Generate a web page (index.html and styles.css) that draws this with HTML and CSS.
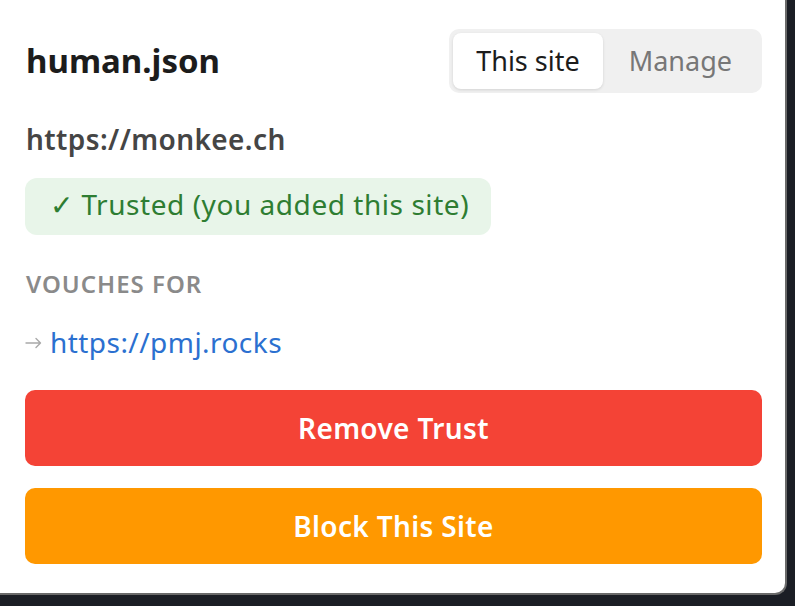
FILE: index.html
```html
<!DOCTYPE html>
<html lang="en">
<head>
<meta charset="utf-8">
<title>human.json</title>
<link rel="stylesheet" href="styles.css">
</head>
<body>
<div class="panel">
  <div class="header">
    <h1 class="title">human.json</h1>
    <div class="tabs">
      <span class="tab tab-active">This site</span>
      <span class="tab">Manage</span>
    </div>
  </div>
  <div class="site-url">https://monkee.ch</div>
  <div class="badge-row"><span class="badge">✓ Trusted (you added this site)</span></div>
  <div class="label">VOUCHES FOR</div>
  <div class="vouch">
    <svg class="arrow" width="17" height="12" viewBox="0 0 17 12" aria-hidden="true"><path d="M1 6H15.5M11 1.5L15.5 6L11 10.5" fill="none" stroke="#a9a9a9" stroke-width="1.4" stroke-linecap="round" stroke-linejoin="round"/></svg>
    <a class="vouch-link" href="#">https://pmj.rocks</a>
  </div>
  <button class="btn btn-red">Remove Trust</button>
  <button class="btn btn-orange">Block This Site</button>
</div>
</body>
</html>
```
FILE: styles.css
```css
* { box-sizing: border-box; }
html, body { margin: 0; padding: 0; }
body {
  background: #1b1e25;
  font-family: "Noto Sans", "Open Sans", sans-serif;
  width: 795px;
  height: 606px;
  overflow: hidden;
}
.panel {
  width: 787px;
  height: 595px;
  background: #ffffff;
  border-right: 2px solid #6a6a6a;
  border-bottom: 2px solid #6a6a6a;
  border-radius: 0 0 12px 0;
  padding: 29px 23px 0 25px;
  display: flex;
  flex-direction: column;
}
.header {
  display: flex;
  justify-content: space-between;
  align-items: center;
  height: 64px;
}
.title {
  margin: 0;
  font-size: 33px;
  font-weight: 700;
  color: #1c1c1c;
  line-height: 44px;
  padding-left: 1px;
}
.tabs {
  display: flex;
  background: #f0f0f0;
  border-radius: 10px;
  padding: 4px;
  height: 64px;
}
.tab {
  font-size: 27px;
  line-height: 56px;
  padding: 0 26px;
  color: #777777;
  border-radius: 8px;
}
.tab-active {
  background: #ffffff;
  color: #1c1c1c;
  padding: 0 23px;
  box-shadow: 0 1px 3px rgba(0, 0, 0, 0.12);
}
.site-url {
  margin-top: 27px;
  font-size: 28px;
  line-height: 38px;
  font-weight: 600;
  color: #454545;
  padding-left: 1px;
  letter-spacing: 0.4px;
}
.badge-row {
  margin-top: 20px;
  display: flex;
}
.badge {
  background: #e8f5e9;
  color: #2e7d32;
  font-size: 28px;
  line-height: 52px;
  padding: 0 22px 5px 25px;
  border-radius: 12px;
  letter-spacing: 0.55px;
}
.label {
  margin-top: 34px;
  font-size: 24px;
  line-height: 30px;
  font-weight: 600;
  color: #8a8a8a;
  letter-spacing: 1px;
  padding-left: 1px;
}
.vouch {
  margin-top: 24px;
  display: flex;
  align-items: center;
  gap: 8px;
  height: 38px;
}
.arrow {
  display: block;
  margin-top: 1px;
}
.vouch-link {
  font-size: 28px;
  line-height: 38px;
  color: #2b70d0;
  text-decoration: none;
  letter-spacing: 0.45px;
}
.btn {
  display: block;
  width: 100%;
  border: 0;
  border-radius: 10px;
  height: 76px;
  font-family: "Noto Sans", "Open Sans", sans-serif;
  font-size: 28px;
  font-weight: 600;
  color: #ffffff;
  padding: 0;
  letter-spacing: 0.35px;
}
.btn-red {
  margin-top: 29px;
  background: #f44336;
}
.btn-orange {
  margin-top: 22px;
  background: #ff9800;
}
```
